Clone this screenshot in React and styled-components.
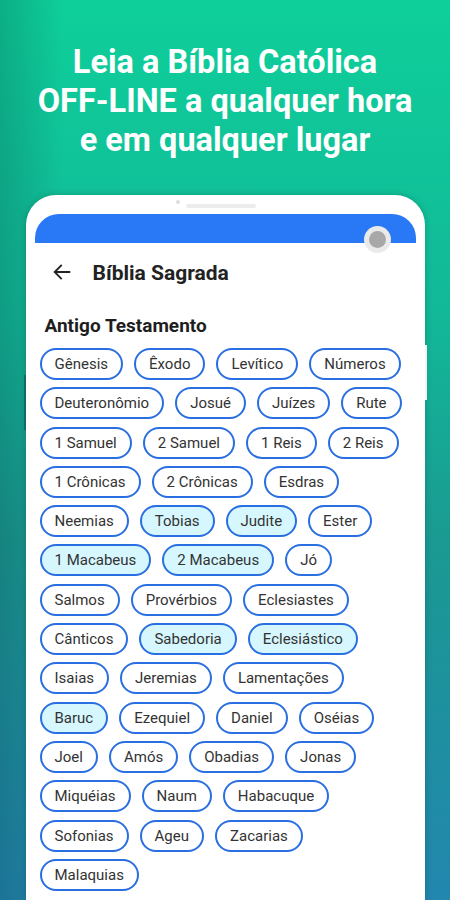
import React from "react";
import styled, { createGlobalStyle } from "styled-components";

const books = [
  "Gênesis", "Êxodo", "Levítico", "Números", "Deuteronômio", "Josué", "Juízes",
  "Rute", "1 Samuel", "2 Samuel", "1 Reis", "2 Reis", "1 Crônicas", "2 Crônicas",
  "Esdras", "Neemias", "Tobias", "Judite", "Ester", "1 Macabeus", "2 Macabeus",
  "Jó", "Salmos", "Provérbios", "Eclesiastes", "Cânticos", "Sabedoria",
  "Eclesiástico", "Isaias", "Jeremias", "Lamentações", "Baruc", "Ezequiel",
  "Daniel", "Oséias", "Joel", "Amós", "Obadias", "Jonas", "Miquéias", "Naum",
  "Habacuque", "Sofonias", "Ageu", "Zacarias", "Malaquias",
];

// deuterocanonical books are shown tinted
const tinted = ["Tobias", "Judite", "1 Macabeus", "2 Macabeus", "Sabedoria", "Eclesiástico", "Baruc"];

const App = () => {
  return (
    <Page>
      <GlobalStyle />
      <Headline>
        Leia a Bíblia Católica
        <br />
        OFF-LINE a qualquer hora
        <br />
        e em qualquer lugar
      </Headline>
      <Phone>
        <SideKey side="left" top={180} />
        <SideKey side="right" top={150} />
        <Earpiece>
          <Dot />
          <Speaker />
        </Earpiece>
        <Screen>
          <StatusBar>
            <Camera />
          </StatusBar>
          <Toolbar>
            <svg width="22" height="22" viewBox="0 0 24 24">
              <path
                d="M20 12H4.5M11 5l-7 7 7 7"
                fill="none"
                stroke="#222"
                strokeWidth="2"
                strokeLinecap="square"
              />
            </svg>
            <Title>Bíblia Sagrada</Title>
          </Toolbar>
          <Section>Antigo Testamento</Section>
          <ChipList>
            {books.map(name => (
              <Chip key={name} tinted={tinted.includes(name) ? 1 : 0}>
                {name}
              </Chip>
            ))}
          </ChipList>
        </Screen>
      </Phone>
    </Page>
  );
};

const GlobalStyle = createGlobalStyle`
  body {
    margin: 0;
    font-family: Roboto, "Liberation Sans", sans-serif;
  }
`;
const Page = styled.div`
  width: 450px;
  height: 900px;
  overflow: hidden;
  display: flex;
  flex-direction: column;
  align-items: center;
  background:
    linear-gradient(90deg, rgba(0, 30, 40, 0.18) 0%, rgba(0, 30, 40, 0) 14%),
    linear-gradient(180deg, #0ecf9a 0%, #12b898 35%, #1a9a92 60%, #2286ae 100%);
`;
const Headline = styled.h1`
  margin: 43px 0 0;
  font-size: 32.5px;
  line-height: 39px;
  font-weight: 700;
  color: #fff;
  text-align: center;
`;
const Phone = styled.div`
  position: relative;
  margin-top: 35px;
  width: 399px;
  flex: 1;
  box-sizing: border-box;
  padding: 0 9px;
  background: #fff;
  border-radius: 30px 30px 0 0;
  box-shadow: 0 0 6px rgba(0, 40, 50, 0.25);
`;
const SideKey = styled.div`
  position: absolute;
  ${props => props.side}: -2px;
  top: ${props => props.top}px;
  width: 2px;
  height: 55px;
  background: ${props => (props.side === "left" ? "#0d6d66" : "#f2f4f4")};
`;
const Earpiece = styled.div`
  height: 19px;
  display: flex;
  align-items: center;
  justify-content: center;
  gap: 6px;
  padding-right: 18px;
`;
const Dot = styled.div`
  width: 4px;
  height: 4px;
  border-radius: 50%;
  background: #ddd;
  margin-top: -6px;
`;
const Speaker = styled.div`
  width: 70px;
  height: 4px;
  border-radius: 2px;
  background: #ececec;
  margin-top: 2px;
`;
const Screen = styled.div`
  display: flex;
  flex-direction: column;
`;
const StatusBar = styled.div`
  position: relative;
  height: 29px;
  background: #2979f6;
  border-radius: 24px 24px 0 0;
`;
const Camera = styled.div`
  position: absolute;
  left: 334px;
  top: 17px;
  width: 17px;
  height: 17px;
  border-radius: 50%;
  background: #a8a8a8;
  box-shadow: 0 0 0 5px #eaeaea;
`;
const Toolbar = styled.div`
  height: 58px;
  display: flex;
  align-items: center;
  gap: 20px;
  padding-left: 16px;
`;
const Title = styled.div`
  font-size: 21px;
  font-weight: 700;
  color: #222;
  margin-top: 1px;
`;
const Section = styled.div`
  margin-top: 14px;
  padding-left: 10px;
  font-size: 19px;
  font-weight: 700;
  color: #1e1e1e;
  line-height: 22px;
`;
const ChipList = styled.div`
  margin-top: 11px;
  padding-left: 5px;
  width: 365px;
  display: flex;
  flex-wrap: wrap;
  column-gap: 11px;
  row-gap: 7.3px;
`;
const Chip = styled.div`
  height: 32px;
  box-sizing: border-box;
  padding: 0 13px;
  display: flex;
  align-items: center;
  border: 2px solid #2a6fe2;
  border-radius: 16px;
  background: ${props => (props.tinted ? "#d6f7fd" : "#fff")};
  font-size: 15px;
  color: #333;
`;

export default App;
